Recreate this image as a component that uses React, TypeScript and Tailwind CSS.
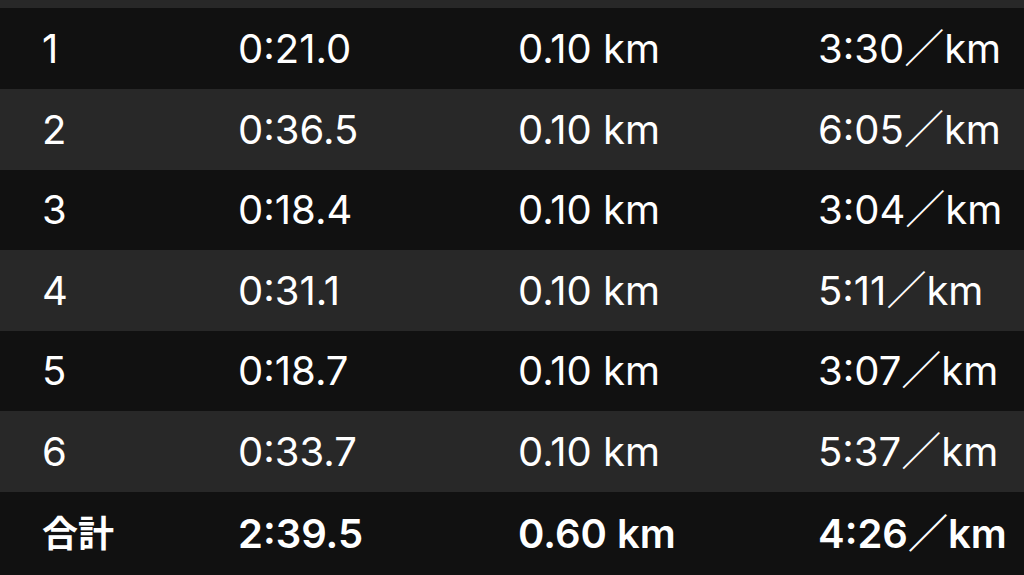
import React from "react";

const rows = [
  ["1", "0:21.0", "0.10 km", "3:30／km"],
  ["2", "0:36.5", "0.10 km", "6:05／km"],
  ["3", "0:18.4", "0.10 km", "3:04／km"],
  ["4", "0:31.1", "0.10 km", "5:11／km"],
  ["5", "0:18.7", "0.10 km", "3:07／km"],
  ["6", "0:33.7", "0.10 km", "5:37／km"],
];
const heights = ["h-[81px]", "h-[81px]", "h-[80px]", "h-[81px]", "h-[80px]", "h-[81px]"];

export default function App() {
  return (
    <div
      className="w-[1024px] h-[575px] bg-[#282828] text-white overflow-hidden flex flex-col"
      style={{ fontFamily: 'Inter, "Noto Sans CJK JP", sans-serif' }}
    >
      <div className="h-[8px] shrink-0 bg-[#282828]" />
      {rows.map((r, i) => (
        <div
          key={i}
          className={`${heights[i]} shrink-0 grid grid-cols-[196px_280px_300px_1fr] items-center pl-[42px] text-[40px] leading-none ${
            i % 2 === 0 ? "bg-[#111111]" : "bg-[#282828]"
          }`}
        >
          {r.map((c, j) => (
            <div key={j}>{c}</div>
          ))}
        </div>
      ))}
      <div className="flex-1 grid grid-cols-[196px_280px_300px_1fr] items-center pl-[42px] text-[40px] leading-none font-semibold bg-[#111111]">
        <div className="text-[36px]">合計</div>
        <div>2:39.5</div>
        <div>0.60 km</div>
        <div>4:26／km</div>
      </div>
    </div>
  );
}
